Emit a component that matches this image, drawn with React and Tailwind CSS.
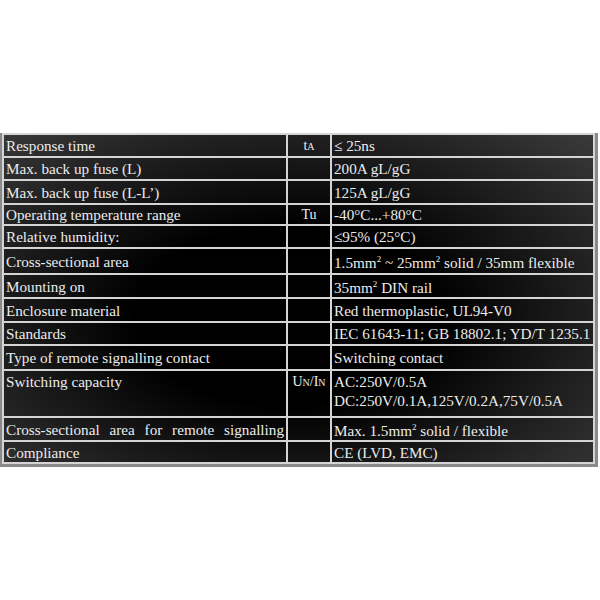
import React from "react";

const sup = (t) => <sup className="text-[9px] -top-[6px]">{t}</sup>;
const sc = (t) => <span className="text-[10px]">{t}</span>;

const rows = [
  { h: 23, label: "Response time", sym: <>t{sc("A")}</>, val: <>≤ 25ns</> },
  { h: 23, label: "Max. back up fuse (L)", val: "200A gL/gG" },
  { h: 24, label: "Max. back up fuse (L-L’)", val: "125A gL/gG" },
  { h: 21, label: "Operating temperature range", sym: "Tu", val: "-40°C...+80°C" },
  { h: 23, label: "Relative humidity:", val: "≤95% (25°C)" },
  { h: 26, sh: true, label: "Cross-sectional area", val: <>1.5mm{sup("2")} ~ 25mm{sup("2")} solid / 35mm flexible</> },
  { h: 24, sh: true, label: "Mounting on", val: <>35mm{sup("2")} DIN rail</> },
  { h: 24, label: "Enclosure material", val: "Red thermoplastic, UL94-V0" },
  { h: 23, label: "Standards", val: "IEC 61643-11; GB 18802.1; YD/T 1235.1" },
  { h: 25, label: "Type of remote signalling contact", val: "Switching contact" },
  {
    h: 47,
    top: true,
    label: "Switching capacity",
    sym: <>U{sc("N")}/I{sc("N")}</>,
    val: (
      <>
        <div>AC:250V/0.5A</div>
        <div>DC:250V/0.1A,125V/0.2A,75V/0.5A</div>
      </>
    ),
  },
  { h: 24, sh: true, justify: true, label: "Cross-sectional area for remote signalling", val: <>Max. 1.5mm{sup("2")} solid / flexible</> },
  { h: 22, label: "Compliance", val: "CE (LVD, EMC)" },
];

export default function App() {
  return (
    <div className="w-[600px] h-[600px] bg-white pt-[133px]" style={{ fontFamily: '"Liberation Serif", "Times New Roman", serif' }}>
      <div className="w-[598px] border-l-2 border-r-[3px] border-b-[3px] border-[#8a8a8a]">
        <div className="border-t-2 border-l-2 border-[#d4d4d4] bg-[radial-gradient(ellipse_at_48%_55%,#000_35%,#3b3b3b_100%)] text-[15.2px] text-[#ececec]">
          {rows.map((r, i) => (
            <div key={i} className="grid grid-cols-[284px_44px_263px]" style={{ height: r.h }}>
              <div className={`border-r-2 border-b-2 border-[#d4d4d4] pl-[2px] pr-[2px] flex ${r.top ? "items-start pt-[1px]" : "items-center"} leading-[19px]`}>
                {r.justify ? (
                  <div className="w-full whitespace-nowrap [text-align-last:justify]">{r.label}</div>
                ) : (
                  <div className="whitespace-nowrap">{r.label}</div>
                )}
              </div>
              <div className={`border-r-2 border-b-2 border-[#d4d4d4] flex justify-center ${r.top ? "items-start pt-[1px]" : "items-center"} leading-[19px] text-[14px]`}>
                {r.sym ? <div className="whitespace-nowrap">{r.sym}</div> : null}
              </div>
              <div className={`border-r-2 border-b-2 border-[#d4d4d4] pl-[2px] flex ${r.top ? "items-start pt-[1px]" : "items-center"} leading-[19px]`}>
                <div className={`whitespace-nowrap ${r.sh ? "pt-[3px]" : ""}`}>{r.val}</div>
              </div>
            </div>
          ))}
        </div>
      </div>
    </div>
  );
}
